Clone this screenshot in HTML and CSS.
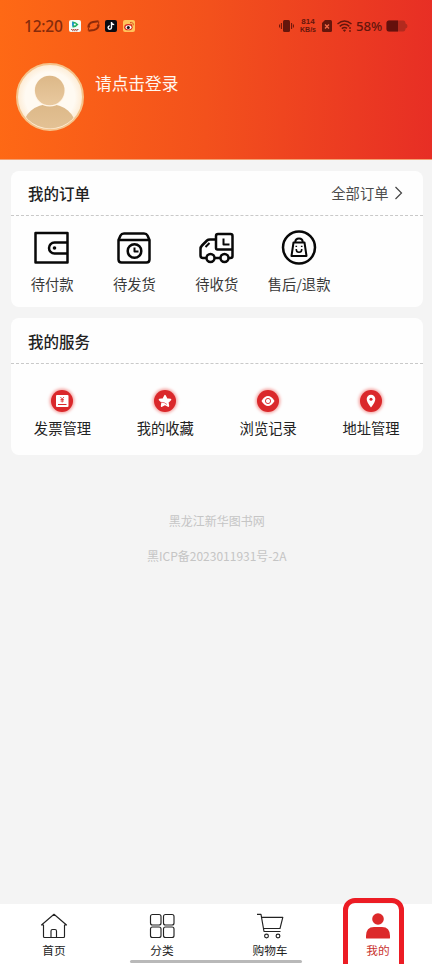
FILE: index.html
```
<!DOCTYPE html>
<html lang="zh-CN">
<head>
<meta charset="utf-8">
<title>我的</title>
<link rel="stylesheet" href="styles.css">
</head>
<body>
<div class="app">
  <header class="hero">
    <div class="status">
      <span class="time">12:20</span>
      <div class="apps">
        <svg width="12" height="12" viewBox="0 0 12 12"><rect width="12" height="12" rx="2" fill="#f4fbf7"/><path d="M3.200 1.500Q6 1 9.500 4.500Q6.500 8 3.500 7.500Z" fill="#20b45c"/><path d="M3.200 1.500L5 3L4 7.500Q2.500 5 3.200 1.500Z" fill="#1c8fdc"/><circle cx="5.800" cy="4.500" r="1" fill="#fff"/><path d="M2 9.500h8M3 10.700h6" stroke="#b55a50" stroke-dasharray="1.500 .5"/></svg>
        <svg width="13" height="12" viewBox="0 0 13 12"><path d="M1.300 7.500Q1.500 3 6 2l5.500-.7M11.700 4.500Q11.500 9 7 10l-5.500.7" fill="none" stroke="#8d2b0a" stroke-width="2"/><path d="M1.200 10.500Q1 8 3 6M11.800 1.500Q12.200 3.500 10 6" fill="none" stroke="#8d2b0a" stroke-width="1"/></svg>
        <svg width="12" height="12" viewBox="0 0 12 12"><rect width="12" height="12" rx="2" fill="#090b12"/><path d="M6.500 2v5.600a1.700 1.700 0 1 1-1.700-1.700M6.500 2.500Q7 4.500 9.200 4.600" fill="none" stroke="#fff" stroke-width="1.400"/></svg>
        <svg width="12" height="12" viewBox="0 0 12 12"><rect width="12" height="12" rx="2" fill="#ffc35b"/><ellipse cx="5.400" cy="7.200" rx="4.200" ry="3.100" fill="#d7241e"/><ellipse cx="5.500" cy="7.300" rx="3" ry="2.100" fill="#fff"/><circle cx="5.300" cy="7.400" r="1.500" fill="#191414"/><path d="M7 2.500Q10.500 1.800 10.300 5.300M7.500 4Q9 4 8.700 5.400" fill="none" stroke="#da431f" stroke-width=".9"/></svg>
      </div>
      <div class="signals">
        <svg width="15" height="14" viewBox="0 0 15 14"><rect x="4" y="1" width="7" height="12" rx="1.500" fill="#65160c"/><path d="M2.400 4v6M.6 5.500v3M12.600 4v6M14.400 5.500v3" stroke="#65160c" stroke-width="1"/></svg>
        <span class="speed"><span>814</span><span class="unit">KB/s</span></span>
        <svg class="sim" width="10" height="12" viewBox="0 0 10 12"><path d="M3 0h5.500Q10 0 10 1.500v9Q10 12 8.500 12h-7Q0 12 0 10.500V3Z" fill="#65160c"/><path d="M3 4.500l4 4m0-4l-4 4" stroke="#f06a48" stroke-width="1.400"/></svg>
        <svg class="wifi" width="15" height="12" viewBox="0 0 15 12"><path d="M.5 4Q7.500-2 14.500 4M2.700 6.400Q7.500 2.200 12.300 6.400M4.800 8.700Q7.500 6.500 10 8.400" fill="none" stroke="#65160c" stroke-width="1.500"/><path d="M5.800 10L7.500 12l1.600-2Q7.500 8.800 5.800 10" fill="#65160c"/><path d="M13 7v2m0 1v2" stroke="#65160c" stroke-width="1.300"/></svg>
        <span class="percent">58%</span>
        <svg class="battery" width="22" height="12" viewBox="0 0 22 12"><path d="M3 .5h14q2.500 0 2.500 3 2 .5 2 2.500t-2 2.500q0 3-2.500 3H3Q.5 11.500.5 9V3Q.5.500 3 .5" fill="#b32a1e"/><path d="M12 .5H3Q.5.500.5 3v6q0 2.500 2.500 2.500h9Z" fill="#65100c"/></svg>
      </div>
    </div>
    <div class="profile">
      <svg class="avatar" width="68" height="68" viewBox="0 0 68 68">
        <defs>
          <linearGradient id="skin" x2="0" y2="1"><stop stop-color="#dcb888"/><stop offset="1" stop-color="#e9c99f"/></linearGradient>
          <radialGradient id="disc"><stop offset=".75" stop-color="#fffaf2"/><stop offset="1" stop-color="#fdebd3"/></radialGradient>
          <clipPath id="round"><circle cx="34" cy="34" r="31.500"/></clipPath>
        </defs>
        <circle cx="34" cy="34" r="33" fill="url(#disc)" stroke="#f5c48c" stroke-width="2"/>
        <g clip-path="url(#round)" fill="url(#skin)"><ellipse cx="33.500" cy="63" rx="26" ry="22"/><circle cx="33.700" cy="28" r="15.500" fill="#fff4e5"/><circle cx="33.700" cy="27.500" r="14.800"/></g>
      </svg>
      <span class="login">请点击登录</span>
    </div>
  </header>

  <main>
    <section class="card orders">
      <div class="card-head"><h2>我的订单</h2><span class="all">全部订单<svg width="8" height="14" viewBox="0 0 8 14"><path d="M.5 1l6 6-6 6" fill="none" stroke="#444" stroke-width="1.200"/></svg></span></div>
      <div class="grid five">
        <div class="item"><svg width="36" height="36" viewBox="0 0 36 36" class="line"><path d="M1.500 3h32v29.500H1.500ZM33.500 12.500H20.500a5.500 5.500 0 0 0 0 11h13"/><circle cx="20.500" cy="18" r="1.800" class="dot"/></svg><span>待付款</span></div>
        <div class="item"><svg width="36" height="36" viewBox="0 0 36 36" class="line"><path d="M2.500 10v19.500q0 3 3 3h25q3 0 3-3V10M2.500 10L4.500 5.500Q5.500 3.500 8 3.500h20q2.500 0 3.500 2L33.500 10Z"/><circle cx="18.500" cy="21" r="6.800"/><path d="M18.500 17.500v4h4" class="thin"/></svg><span>待发货</span></div>
        <div class="item"><svg width="36" height="36" viewBox="0 0 36 36" class="line"><path d="M7 28H4q-2.500 0-2.500-2.500V19q0-2 1.500-3.500l5-5Q9 9.500 11 9.500h6M17 6q0-2 2-2h12.500q2 0 2 2v20q0 2-2 2H30M17 6v12q0 1.500 1.500 1.500h15M15 28h6"/><circle cx="11.500" cy="28" r="4" class="wheel"/><circle cx="25.500" cy="28" r="4" class="wheel"/><path d="M24.500 8.500v6h6M6.500 17l4-4" class="thin"/></svg><span>待收货</span></div>
        <div class="item"><svg width="36" height="36" viewBox="0 0 36 36" class="line"><circle cx="18" cy="17.500" r="16"/><path d="M12.500 12.500h11l2 13.500h-15Z" class="thin"/><path d="M14.300 12q0-3.500 3.700-3.500t3.700 3.500" class="thin"/><path d="M15.300 19v.5q0 2.700 2.700 2.700t2.700-2.700V19M15.300 15.700v1.300M20.700 15.700v1.300" class="thin face"/></svg><span>售后/退款</span></div>
      </div>
    </section>

    <section class="card services">
      <div class="card-head"><h2>我的服务</h2></div>
      <div class="grid four">
        <div class="item"><i class="badge"><svg width="22" height="22" viewBox="0 0 22 22"><rect x="5" y="5" width="12.500" height="12" rx="1" fill="#fff"/><path d="M7 14.500h8.500" stroke="#da282b"/><path d="M9.400 7l1.800 2L13 7M11.200 9v3.500M9.500 9.500h3.400M9.500 11h3.400" fill="none" stroke="#da282b" stroke-width=".8"/></svg></i><span>发票管理</span></div>
        <div class="item"><i class="badge"><svg width="22" height="22" viewBox="0 0 22 22"><path d="M11 5.800l1.700 3.400 3.700.5-2.700 2.600.6 3.700-3.300-1.800-3.300 1.800.6-3.700L5.600 9.700l3.700-.5Z" fill="#fff" stroke="#fff" stroke-width="1.800" stroke-linejoin="round"/><path d="M6.500 12.300q4-.5 6.500 2.200" fill="none" stroke="#da282b" stroke-width=".6"/></svg></i><span>我的收藏</span></div>
        <div class="item"><i class="badge"><svg width="22" height="22" viewBox="0 0 22 22"><path d="M4.500 11Q7.500 6 11 6t6.500 5Q14.500 16 11 16T4.500 11" fill="#fff"/><circle cx="11" cy="11" r="2.600" fill="none" stroke="#da282b" stroke-width=".9"/></svg></i><span>浏览记录</span></div>
        <div class="item"><i class="badge"><svg width="22" height="22" viewBox="0 0 22 22"><path d="M11 17.500Q6.700 12 6.700 9a4.300 4.300 0 0 1 8.600 0Q15.300 12 11 17.500" fill="#fff"/><circle cx="11" cy="9.300" r="1.500" fill="#da282b"/></svg></i><span>地址管理</span></div>
      </div>
    </section>

    <footer><p>黑龙江新华图书网</p><p>黑ICP备2023011931号-2A</p></footer>
  </main>

  <nav class="tabs">
    <div class="tab"><svg width="28" height="26" viewBox="0 0 28 26"><path d="M3.500 12v11.500q0 1 1 1h19q1 0 1-1V12H26.500L14 1.300 1.500 12ZM11 24.500V18q0-1.500 1.500-1.500h2.500q1.500 0 1.500 1.500v6.500"/></svg><span>首页</span></div>
    <div class="tab"><svg width="28" height="26" viewBox="0 0 28 26"><rect x="2.500" y="1.500" width="10.500" height="10.500" rx="2"/><rect x="15.500" y="1.500" width="10.500" height="10.500" rx="2"/><rect x="2.500" y="14" width="10.500" height="10.500" rx="2"/><rect x="15.500" y="14" width="10.500" height="10.500" rx="2"/></svg><span>分类</span></div>
    <div class="tab"><svg width="28" height="26" viewBox="0 0 28 26"><path d="M1 1.300h4L8 18.500h16.500M5.800 4.300h21L24 15.500H7.500"/><circle cx="10.500" cy="23" r="1.900"/><circle cx="22" cy="23" r="1.900"/></svg><span>购物车</span></div>
    <div class="tab active"><svg width="28" height="26" viewBox="0 0 28 26"><circle cx="14" cy="6" r="5.800"/><path d="M2 25v-2q0-9 8-9h8q8 0 8 9v2q0 .5-1 .5H3q-1 0-1-.5"/></svg><span>我的</span><b class="marker"></b></div>
    <div class="home-bar"></div>
  </nav>
</div>
</body>
</html>
```

FILE: styles.css
```
* { box-sizing: border-box; }
body { margin: 0; font-family: "Noto Sans CJK SC", sans-serif; color: #222; }
svg { display: block; flex: none; }
.app { width: 432px; height: 964px; display: flex; flex-direction: column; background: #f4f4f4; overflow: hidden; }
.hero { height: 160px; flex: none; background: linear-gradient(92deg, #fe6915 0%, #f3511c 48%, #e72e25 100%); border-bottom: 1px solid #f3a173; }
.status { height: 51px; padding: 0 24px; display: flex; align-items: center; font-family: "Noto Sans", sans-serif; }
.time { width: 39px; font-size: 15.500px; font-weight: 500; letter-spacing: -.2px; color: #852b0c; }
.apps { display: flex; gap: 6px; margin-left: 6px; }
.apps svg + svg { margin-left: -.3px; }
.signals { display: flex; align-items: center; margin: 0 0 0 auto; color: #65160c; }
.speed { width: 18px; margin: 0 5px; display: flex; flex-direction: column; align-items: center; font-family: "Liberation Sans", sans-serif; font-size: 8px; line-height: 9px; font-weight: 700; }
.unit { font-size: 7px; line-height: 8px; }
.sim { margin-right: 5px; }
.wifi { margin-right: 4px; }
.percent { width: 27px; font-size: 13.200px; font-weight: 500; }
.battery { margin-left: 3px; }
.profile { display: flex; padding: 12px 16px; gap: 11px; }
.login { color: #fff6ed; font-size: 16.700px; line-height: 24px; margin-top: 8px; }
main { flex: 1; padding: 10.500px 9.500px 0 11px; }
.card { background: #fefefe; border-radius: 8px; height: 136.500px; margin-bottom: 11px; }
.card-head { height: 45px; display: flex; align-items: center; justify-content: space-between; padding: 0 20px 0 17px; border-bottom: 1px dashed #c9c9c9; }
.services .card-head { height: 46px; }
h2 { margin: 0; font-size: 15.500px; font-weight: 500; line-height: 24px; }
.all { display: flex; align-items: center; gap: 6px; font-size: 14.300px; color: #4c4c4c; line-height: 20px; }
.grid { display: grid; }
.five { grid-template-columns: repeat(5, 1fr); padding-top: 14px; }
.four { grid-template-columns: repeat(4, 1fr); padding-top: 26px; }
.item { display: flex; flex-direction: column; align-items: center; font-size: 14.300px; line-height: 20px; white-space: nowrap; }
.five .item { gap: 8.500px; color: #3a3a3a; }
.four .item { gap: 5.500px; }
.line { fill: none; stroke: #080808; stroke-width: 2.500; stroke-linejoin: round; }
.thin { stroke-width: 2; }
.face { stroke-width: 1.600; }
.wheel { fill: #fefefe; }
.dot { fill: #080808; stroke: none; }
.badge { width: 22px; height: 22px; border-radius: 50%; background: #da282b; box-shadow: 0 0 3px 1.500px #f5aaa8; }
footer { text-align: center; font-size: 12px; line-height: 18px; color: #c5c5c5; padding: 46px 0 0 0; }
footer p { margin: 0 0 17px; }
.tabs { height: 60px; flex: none; background: #fff; display: grid; grid-template-columns: repeat(4, 1fr); position: relative; }
.tab { display: flex; flex-direction: column; align-items: center; padding-top: 8.500px; font-size: 11.700px; line-height: 18px; gap: 2px; position: relative; }
.tab svg { fill: none; stroke: #222; stroke-width: 1.150; stroke-linejoin: round; }
.tab.active { color: #c9332f; }
.tab.active svg { fill: #dc292a; stroke: none; }
.marker { position: absolute; left: 19px; top: -6px; width: 61px; height: 80px; border: 5px solid #ec1c24; border-radius: 12px; }
.home-bar { position: absolute; left: 130px; bottom: 1px; width: 172px; height: 3px; border-radius: 2px; background: #b9b9b9; }
```
